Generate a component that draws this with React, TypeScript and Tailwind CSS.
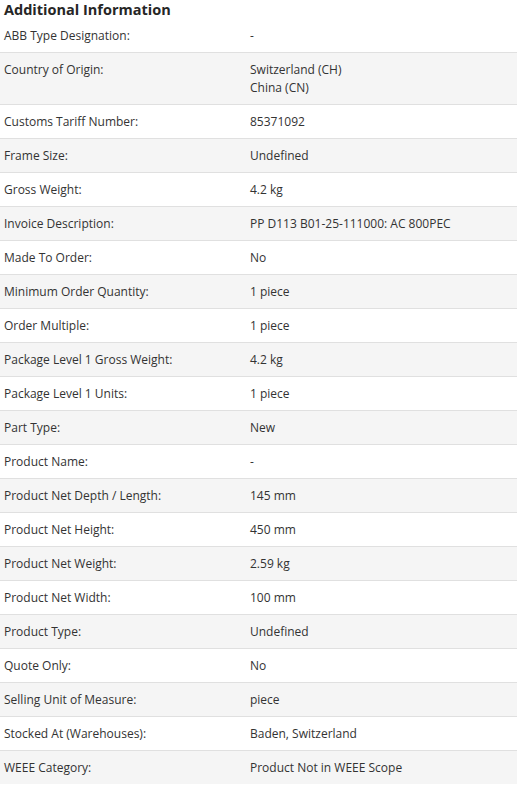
import React from "react";

const rows: [string, string[]][] = [
  ["ABB Type Designation:", ["-"]],
  ["Country of Origin:", ["Switzerland (CH)", "China (CN)"]],
  ["Customs Tariff Number:", ["85371092"]],
  ["Frame Size:", ["Undefined"]],
  ["Gross Weight:", ["4.2 kg"]],
  ["Invoice Description:", ["PP D113 B01-25-111000: AC 800PEC"]],
  ["Made To Order:", ["No"]],
  ["Minimum Order Quantity:", ["1 piece"]],
  ["Order Multiple:", ["1 piece"]],
  ["Package Level 1 Gross Weight:", ["4.2 kg"]],
  ["Package Level 1 Units:", ["1 piece"]],
  ["Part Type:", ["New"]],
  ["Product Name:", ["-"]],
  ["Product Net Depth / Length:", ["145 mm"]],
  ["Product Net Height:", ["450 mm"]],
  ["Product Net Weight:", ["2.59 kg"]],
  ["Product Net Width:", ["100 mm"]],
  ["Product Type:", ["Undefined"]],
  ["Quote Only:", ["No"]],
  ["Selling Unit of Measure:", ["piece"]],
  ["Stocked At (Warehouses):", ["Baden, Switzerland"]],
  ["WEEE Category:", ["Product Not in WEEE Scope"]],
];

export default function App() {
  return (
    <div className="w-[517px] bg-white font-['Open_Sans',sans-serif] text-[#333]">
      <h2 className="pl-1 text-[14.5px] font-bold leading-[19px] text-[#262626]">
        Additional Information
      </h2>
      <div>
        {rows.map(([label, values], i) => (
          <div
            key={label}
            className={`grid grid-cols-[250px_1fr] text-[12px] leading-[18px] pt-[8px] pb-[7px] ${
              i % 2 === 1 ? "bg-[#f5f5f5]" : "bg-white"
            } ${i < rows.length - 1 ? "border-b border-[#e0e0e0]" : ""}`}
          >
            <div className="pl-1">{label}</div>
            <div>
              {values.map((v) => (
                <div key={v}>{v}</div>
              ))}
            </div>
          </div>
        ))}
      </div>
    </div>
  );
}
